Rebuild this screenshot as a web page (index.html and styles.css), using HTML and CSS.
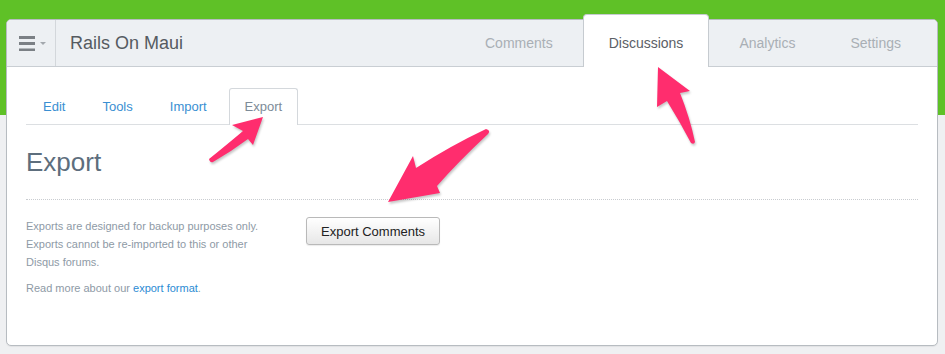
FILE: index.html
```html
<!DOCTYPE html>
<html lang="en">
<head>
  <meta charset="UTF-8" />
  <meta name="viewport" content="width=device-width, initial-scale=1.0"/>
  <title>Rails On Maui - Export</title>

  <link rel="stylesheet" href="styles.css">
</head>
<body>

  <div class="page">
    <div class="card">
      <header class="topbar">
        <button class="menu-toggle" aria-label="Menu">
          <svg width="27" height="15" viewBox="0 0 27 15">
            <rect x="0" y="0" width="16" height="3" fill="#7b8085"/>
            <rect x="0" y="6" width="16" height="3" fill="#7b8085"/>
            <rect x="0" y="12.5" width="16" height="3" fill="#7b8085"/>
            <polygon points="21,6 27,6 24,9" fill="#a3a8ad"/>
          </svg>
        </button>
        <h1 class="site-name">Rails On Maui</h1>
        <nav class="main-tabs">
          <a href="#">Comments</a>
          <a href="#" class="active">Discussions</a>
          <a href="#">Analytics</a>
          <a href="#">Settings</a>
        </nav>
      </header>

      <div class="content">
        <ul class="sub-tabs">
          <li><a href="#">Edit</a></li>
          <li><a href="#">Tools</a></li>
          <li><a href="#">Import</a></li>
          <li class="active"><a href="#">Export</a></li>
        </ul>

        <h2 class="page-title">Export</h2>

        <div class="export-row">
          <div class="export-info">
            <p>Exports are designed for backup purposes only. Exports cannot be re-imported to this or other Disqus forums.</p>
            <p>Read more about our <a href="#">export format</a>.</p>
          </div>
          <div class="export-action">
            <button class="btn">Export Comments</button>
          </div>
        </div>
      </div>
    </div>

    <!-- annotation arrows drawn over the screenshot -->
    <svg class="annotations" width="945" height="354" viewBox="0 0 945 354">
      <path d="M263,117 L232,125 L243,131 Q224,147 209,159 Q210,163 213,162 Q232,151 248,139 L253,145 Z"/>
      <path d="M658,67 L657,107 L667,101 Q680,122 691,143 Q694,145 695,142 Q690,118 680,93 L690,91 Z"/>
      <path d="M388,202 L413,156 L416,168 Q450,146 486,129 Q491,130 488,134 Q458,162 437,186 L440,193 Z"/>
    </svg>
  </div>

</body>
</html>
```

FILE: styles.css
```css
body {
  font-family: 'Liberation Sans', Arial, sans-serif;
  background: linear-gradient(#5fc127 0, #5fc127 115px, #eff0f2 115px);
  margin: 0;
  padding: 0;
}

.page {
  position: relative;
  width: 945px;
  height: 354px;
  overflow: hidden;
}

.card {
  margin: 19px 7px 0 6px;
  height: 327px;
  box-sizing: border-box;
  background-color: white;
  border: 1px solid #b7bcc1;
  border-radius: 5px;
  box-shadow: 0 1px 1px rgba(0, 0, 0, 0.06);
}

/* top bar */

.topbar {
  display: flex;
  align-items: stretch;
  height: 46px;
  background-color: #edf0f3;
  border-bottom: 1px solid #c9ced3;
  border-radius: 4px 4px 0 0;
}

.menu-toggle {
  width: 49px;
  padding: 0 0 0 12px;
  display: flex;
  align-items: center;
  background: none;
  border: none;
  border-right: 1px solid #d3d7db;
  cursor: pointer;
}

.site-name {
  margin: 0 0 0 14px;
  font-size: 18px;
  font-weight: normal;
  line-height: 46px;
  color: #555b61;
}

.main-tabs {
  margin-left: auto;
  display: flex;
  gap: 5px;
  padding-right: 11px;
}

.main-tabs a {
  padding: 0 25px;
  font-size: 14px;
  line-height: 46px;
  color: #a9afb5;
  text-decoration: none;
}

.main-tabs a.active {
  position: relative;
  margin: -6px 0 -1px;
  padding: 5px 25px 0;
  background-color: white;
  border: 1px solid #c6cbd0;
  border-bottom: none;
  border-radius: 4px 4px 0 0;
  color: #5b6066;
}

/* content */

.content {
  padding: 21px 19px 0 19px;
}

.sub-tabs {
  list-style: none;
  display: flex;
  gap: 7px;
  margin: 0;
  padding: 0 0 0 2px;
  border-bottom: 1px solid #dcdfe2;
}

.sub-tabs a {
  display: block;
  padding: 0 14px;
  font-size: 13px;
  line-height: 35px;
  color: #3a8fd2;
  text-decoration: none;
  border: 1px solid transparent;
  border-bottom: none;
  border-radius: 3px 3px 0 0;
}

.sub-tabs .active a {
  margin-bottom: -1px;
  padding: 0 15px 1px;
  background-color: white;
  border-color: #d4d8dc;
  color: #7d8b98;
}

.page-title {
  margin: 21px 0 0;
  padding-bottom: 21px;
  border-bottom: 1px dotted #c9ccd0;
  font-size: 26px;
  font-weight: normal;
  line-height: 32px;
  color: #5d6e7d;
}

.export-row {
  display: flex;
  margin-top: 17px;
}

.export-info {
  width: 280px;
}

.export-info p {
  max-width: 250px;
  margin: 0 0 8px;
  font-size: 11px;
  line-height: 18px;
  color: #8e9aa6;
}

.export-info a {
  color: #2b8bd3;
  text-decoration: none;
}

.btn {
  height: 28px;
  padding: 0 14px;
  font-family: 'Liberation Sans', Arial, sans-serif;
  font-size: 13px;
  color: #222;
  background: linear-gradient(#ffffff, #e7e7e7);
  border: 1px solid #b9b9b9;
  border-radius: 3px;
  box-shadow: 0 1px 1px rgba(0, 0, 0, 0.08);
  cursor: pointer;
}

/* arrows */

.annotations {
  position: absolute;
  top: 0;
  left: 0;
  pointer-events: none;
}

.annotations path {
  fill: #ff2d6e;
  filter: drop-shadow(1px 2px 1px rgba(0, 0, 0, 0.22));
}
```
